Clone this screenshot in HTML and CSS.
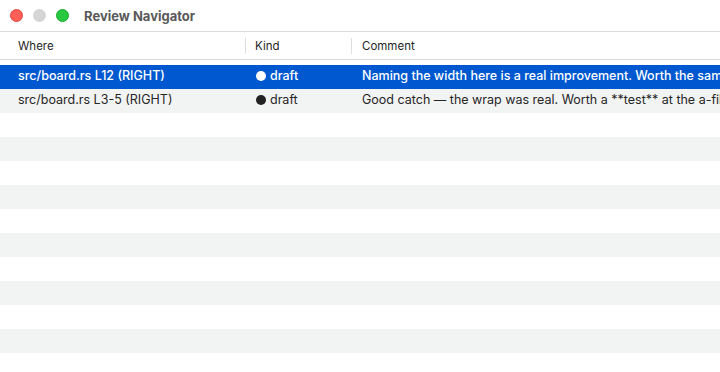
FILE: index.html
```html
<!DOCTYPE html>
<html lang="en">
<head>
  <meta charset="UTF-8">
  <title>Review Navigator</title>
  <link rel="stylesheet" href="styles.css">
</head>
<body>
<div class="window">
  <div class="titlebar">
    <div class="lights">
      <span class="light red"></span>
      <span class="light gray"></span>
      <span class="light green"></span>
    </div>
    <div class="title">Review Navigator</div>
  </div>

  <div class="header">
    <div class="col where">Where</div>
    <div class="col kind"><span class="sep"></span>Kind</div>
    <div class="col comment"><span class="sep"></span>Comment</div>
  </div>

  <div class="rows">
    <div class="row selected">
      <div class="col where">src/board.rs L12 (RIGHT)</div>
      <div class="col kind"><span class="dot"></span>draft</div>
      <div class="col comment">Naming the width here is a real improvement. Worth the same treatment for the height constant below.</div>
    </div>
    <div class="row odd">
      <div class="col where">src/board.rs L3-5 (RIGHT)</div>
      <div class="col kind"><span class="dot"></span>draft</div>
      <div class="col comment">Good catch — the wrap was real. Worth a **test** at the a-file and h-file edges.</div>
    </div>
    <div class="row"></div>
    <div class="row odd"></div>
    <div class="row"></div>
    <div class="row odd"></div>
    <div class="row"></div>
    <div class="row odd"></div>
    <div class="row"></div>
    <div class="row odd"></div>
    <div class="row"></div>
    <div class="row odd"></div>
    <div class="row"></div>
  </div>
</div>
</body>
</html>
```

FILE: styles.css
```css
body { margin: 0; font-family: Inter, "Liberation Sans", sans-serif; background: #fff; overflow: hidden; }
.window { width: 720px; height: 372px; overflow: hidden; }

.titlebar {
  height: 31px;
  display: flex;
  align-items: center;
  border-bottom: 1px solid #dcdcdc;
}
.lights { display: flex; gap: 10px; padding-left: 10px; }
.light { width: 13px; height: 13px; border-radius: 50%; }
.light.red { background: #fe5f57; border: 0.5px solid #e2463f; box-sizing: border-box; }
.light.gray { background: #d5d5d5; }
.light.green { background: #28c840; border: 0.5px solid #1aab29; box-sizing: border-box; }
.title { margin-left: 15px; font-size: 13px; font-weight: 700; color: #595959; }

.header {
  height: 27px;
  display: flex;
  align-items: center;
  border-bottom: 1px solid #dcdcdc;
  font-size: 11.5px;
  color: #262626;
  margin-bottom: 5px;
}
.col { white-space: nowrap; overflow: hidden; display: flex; align-items: center; }
.where { width: 245px; padding-left: 18px; box-sizing: border-box; }
.kind { width: 106px; padding-left: 10px; box-sizing: border-box; }
.comment { flex: 1; padding-left: 11px; box-sizing: border-box; }
.header .col { height: 100%; overflow: visible; }
.sep { width: 1px; height: 16px; background: #dedede; margin-left: -10px; margin-right: 9px; flex-shrink: 0; }
.header .comment .sep { margin-left: -11px; margin-right: 10px; }

.row {
  height: 24px;
  display: flex;
  align-items: flex-start;
  font-size: 12.5px;
  color: #262626;
  line-height: 16px;
}
.row .col { padding-top: 3px; }
.row.odd { background: #f2f3f3; }
.row.selected { background: #0058d0; color: #fff; font-weight: 500; }
.dot { width: 10px; height: 10px; border-radius: 50%; background: #222; margin-left: 1px; margin-right: 4px; }
.selected .dot { background: #fff; }
```
